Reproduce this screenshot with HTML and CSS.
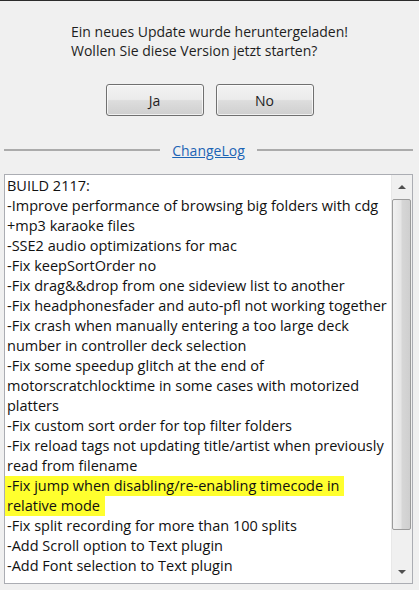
FILE: index.html
```html
<!DOCTYPE html>
<html lang="de">
<head>
  <meta charset="UTF-8">
  <meta name="viewport" content="width=device-width, initial-scale=1">
  <title>Update</title>
  <link rel="stylesheet" href="styles.css">
</head>
<body>

  <div class="dialog">
    <div class="message">
      <p>Ein neues Update wurde heruntergeladen!<br>Wollen Sie diese Version jetzt starten?</p>
    </div>

    <div class="buttons">
      <button class="btn">Ja</button>
      <button class="btn">No</button>
    </div>

    <div class="divider">
      <span class="line"></span>
      <a class="link" href="#">ChangeLog</a>
      <span class="line"></span>
    </div>

    <!-- changelog box -->
    <div class="log">
      <div class="log-text">
        <div>BUILD 2117:</div>
        <div>-Improve performance of browsing big folders with cdg<br>+mp3 karaoke files</div>
        <div>-SSE2 audio optimizations for mac</div>
        <div>-Fix keepSortOrder no</div>
        <div>-Fix drag&amp;&amp;drop from one sideview list to another</div>
        <div>-Fix headphonesfader and auto-pfl not working together</div>
        <div>-Fix crash when manually entering a too large deck<br>number in controller deck selection</div>
        <div>-Fix some speedup glitch at the end of<br>motorscratchlocktime in some cases with motorized<br>platters</div>
        <div>-Fix custom sort order for top filter folders</div>
        <div>-Fix reload tags not updating title/artist when previously<br>read from filename</div>
        <div><mark class="hl">-Fix jump when disabling/re-enabling timecode in</mark><br><mark class="hl">relative mode</mark></div>
        <div>-Fix split recording for more than 100 splits</div>
        <div>-Add Scroll option to Text plugin</div>
        <div>-Add Font selection to Text plugin</div>
      </div>
      <div class="scrollbar">
        <div class="arrow up"></div>
        <div class="track">
          <div class="thumb"></div>
        </div>
        <div class="arrow down"></div>
      </div>
    </div>
  </div>

</body>
</html>
```

FILE: styles.css
```css
:root {
  --bg: #f0f0f0;
  --text: #1e1e1e;
  --ui-font: 'Open Sans', 'Noto Sans', sans-serif;
}

body {
  margin: 0;
  background: var(--bg);
  color: var(--text);
  font-family: var(--ui-font);
}

.dialog {
  width: 419px;
  height: 590px;
  border-top: 1px solid #2b2b2b;
  box-sizing: border-box;
  display: flex;
  flex-direction: column;
}

.message {
  display: flex;
  justify-content: center;
  padding-top: 21px;
}

.message p {
  margin: 0;
  font-size: 14px;
  line-height: 19px;
}

.buttons {
  display: flex;
  justify-content: center;
  gap: 12px;
  margin-top: 24px;
}

.btn {
  width: 98px;
  height: 32px;
  border: 1px solid #707070;
  border-radius: 3px;
  background: linear-gradient(#f2f2f2 0%, #ebebeb 48%, #dddddd 52%, #cfcfcf 100%);
  box-shadow: inset 0 0 0 1px rgba(255, 255, 255, 0.7);
  font-family: var(--ui-font);
  font-size: 14px;
  color: var(--text);
  padding: 0;
}

.divider {
  display: flex;
  align-items: center;
  gap: 12px;
  margin: 22px 6px 0 4px;
  height: 24px;
}

.line {
  flex: 1;
  height: 2px;
  background: #ababab;
}

.link {
  font-size: 14px;
  color: #1c64b5;
  text-decoration: underline;
}

.log {
  flex: 1;
  display: flex;
  margin: 12px 6px 6px 4px;
  border: 1px solid #abadb3;
  background: #fff;
}

.log-text {
  flex: 1;
  padding: 1px 0 0 2px;
  font-size: 14.5px;
  line-height: 20px;
  white-space: nowrap;
  overflow: hidden;
  color: #111;
}

.hl {
  display: inline-block;
  background: #ffff2e;
  color: inherit;
  margin-left: -3px;
  padding: 0 5px 0 3px;
}

/* fake scrollbar */
.scrollbar {
  width: 20px;
  display: flex;
  flex-direction: column;
  background: #f0f0f0;
  border-left: 1px solid #e8e8e8;
}

.arrow {
  height: 23px;
  display: flex;
  justify-content: center;
  align-items: center;
}

.arrow::before {
  content: "";
  border-left: 4px solid transparent;
  border-right: 4px solid transparent;
}

.up::before   { border-bottom: 4px solid #505050; }
.down::before { border-top: 4px solid #505050; }

.track {
  flex: 1;
  padding: 1px 1px 0 0;
}

.thumb {
  height: 331px;
  border: 1px solid #9b9b9b;
  border-radius: 2px;
  box-sizing: border-box;
  background: linear-gradient(90deg, #f1f1f1 0%, #e6e6e6 45%, #d6d6d6 55%, #cfcfcf 100%);
}
```
